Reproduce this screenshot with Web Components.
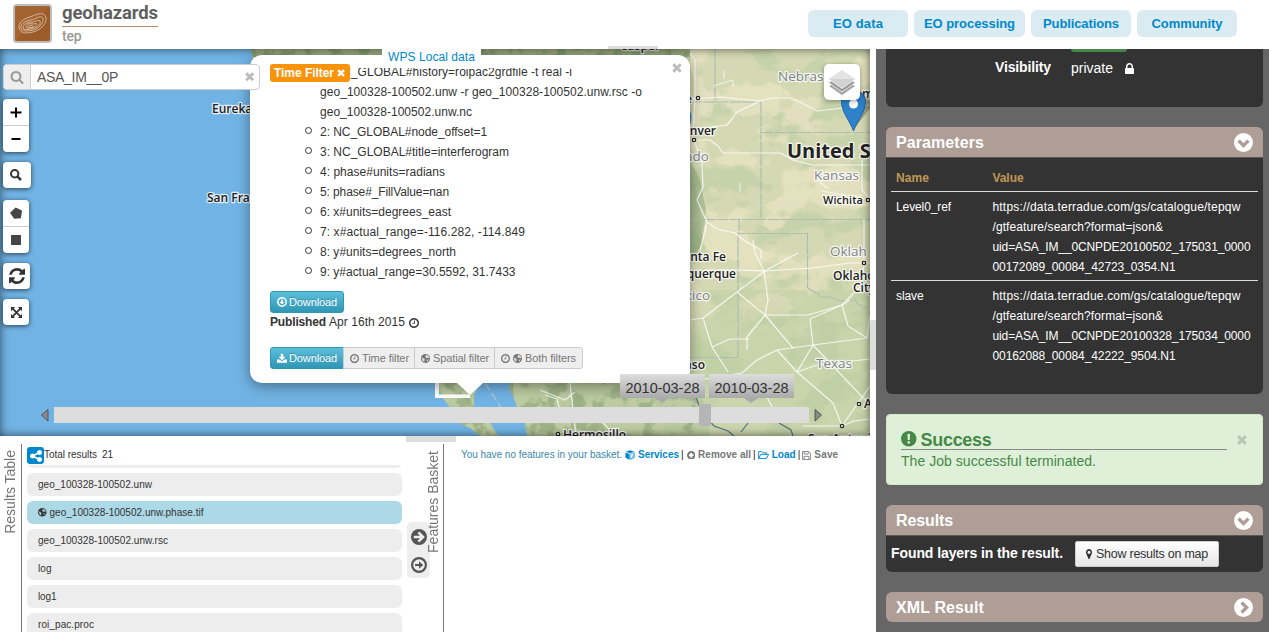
<!DOCTYPE html>
<html lang="en">
<head>
<meta charset="utf-8">
<title>Geohazards TEP</title>
<style>
html,body{margin:0;height:100%;overflow:hidden;background:#fff}
body{font:12px/20px "Liberation Sans",Arial,sans-serif;color:#333}
</style>
</head>
<body>
<tep-app></tep-app>
<script>
const define=(name,html,setup)=>{
  const t=document.createElement('template');t.innerHTML=html;
  customElements.define(name,class extends HTMLElement{
    constructor(){super();this.attachShadow({mode:'open'}).appendChild(t.content.cloneNode(true));}
    connectedCallback(){if(setup)setup(this,this.shadowRoot);}
  });
};

/* A run of text tracked to a given length (w, in px). */
define('fit-text','<style>:host{display:inline-block;white-space:pre;flex:none}</style><slot></slot>',el=>{
  const w=+el.getAttribute('w');if(!w)return;
  const n=el.textContent.length;
  const r=el.getBoundingClientRect().width;
  el.style.letterSpacing=((w-r)/n).toFixed(3)+'px';
});

const CLOCK='<path d="M1024 544v448q0 14-9 23t-23 9h-320q-14 0-23-9t-9-23v-64q0-14 9-23t23-9h224v-352q0-14 9-23t23-9h64q14 0 23 9t9 23zm416 352q0-148-73-273t-198-198-273-73-273 73-198 198-73 273 73 273 198 198 273 73 273-73 198-198 73-273zm224 0q0 209-103 385.5t-279.5 279.5-385.5 103-385.5-103-279.5-279.5-103-385.5 103-385.5 279.5-279.5 385.5-103 385.5 103 279.5 279.5 103 385.5z"/>';
const S='fill="none" stroke="currentColor"';
const ICONS={
 search:['0 0 1792 1792','<path d="M1216 832q0-185-131.5-316.5t-316.5-131.5-316.5 131.5-131.5 316.5 131.5 316.5 316.5 131.5 316.5-131.5 131.5-316.5zm512 832q0 52-38 90t-90 38q-54 0-90-38l-343-342q-179 124-399 124-143 0-273.5-55.5t-225-150-150-225-55.5-273.5 55.5-273.5 150-225 225-150 273.5-55.5 273.5 55.5 225 150 150 225 55.5 273.5q0 220-124 399l343 343q37 37 37 90z"/>'],
 bsearch:['0 0 12 12','<circle cx="4.700" cy="4.700" r="3.700" '+S+' stroke-width="2"/><path d="M7.300 7.300 11 11" '+S+' stroke-width="2.500"/>'],
 refresh:['128 128 1536 1536','<path d="M1639 1056q0 5-1 7-64 268-268 434.5t-478 166.5q-146 0-282.5-55t-243.5-157l-129 129q-19 19-45 19t-45-19-19-45v-448q0-26 19-45t45-19h448q26 0 45 19t19 45-19 45l-137 137q71 66 161 102t187 36q134 0 250-65t186-179q11-17 53-117 8-23 30-23h192q13 0 22.5 9.5t9.5 22.5zm25-800v448q0 26-19 45t-45 19h-448q-26 0-45-19t-19-45 19-45l138-138q-148-137-349-137-134 0-250 65t-186 179q-11 17-53 117-8 23-30 23h-199q-13 0-22.5-9.5t-9.5-22.5v-7q65-268 270-434.5t480-166.5q146 0 284 55.5t245 156.5l130-129q19-19 45-19t45 19 19 45z"/>'],
 share:['128 128 1536 1536','<path d="M1344 1024q133 0 226.5 93.5t93.5 226.5-93.5 226.5-226.5 93.5-226.5-93.5-93.5-226.5q0-12 2-34l-360-180q-92 86-218 86-133 0-226.5-93.5t-93.5-226.5 93.5-226.5 226.5-93.5q126 0 218 86l360-180q-2-22-2-34 0-133 93.5-226.5t226.5-93.5 226.5 93.5 93.5 226.5-93.5 226.5-226.5 93.5q-126 0-218-86l-360 180q2 22 2 34t-2 34l360 180q92-86 218-86z"/>'],
 lock:['320 128 1152 1408','<path d="M640 768h512v-192q0-106-75-181t-181-75-181 75-75 181v192zm832 96v576q0 40-28 68t-68 28h-960q-40 0-68-28t-28-68v-576q0-40 28-68t68-28h32v-192q0-184 132-316t316-132 316 132 132 316v192h32q40 0 68 28t28 68z"/>'],
 marker:['384 128 1024 1536','<path d="M1152 640q0-106-75-181t-181-75-181 75-75 181 75 181 181 75 181-75 75-181zm256 0q0 109-33 179l-364 774q-16 33-47.5 52t-67.5 19-67.5-19-46.5-52l-365-774q-33-70-33-179 0-212 150-362t362-150 362 150 150 362z"/>'],
 clock:['128 128 1536 1536',CLOCK],
 x:['0 0 10 10','<path d="M1.3 1.3 8.7 8.7M8.7 1.3 1.3 8.7" '+S+' stroke-width="3"/>'],
 down:['0 0 20 20','<circle cx="10" cy="10" r="10"/><path d="M4.8 8l5.2 5.2L15.200 8" fill="none" stroke="var(--in,#ae9e96)" stroke-width="3.600"/>'],
 next:['0 0 20 20','<circle cx="10" cy="10" r="10"/><path d="M8 4.800l5.200 5.200L8 15.200" fill="none" stroke="var(--in,#ae9e96)" stroke-width="3.600"/>'],
 arrowc:['0 0 16 16','<circle cx="8" cy="8" r="8"/><path d="M2.800 8h8.500M7.400 3.300 12.100 8l-4.700 4.700" fill="none" stroke="#eee" stroke-width="2.500"/>'],
 arrowo:['0 0 16 16','<circle cx="8" cy="8" r="6.900" '+S+' stroke-width="2.200"/><path d="M4 6.900h4V4.200L12.200 8 8 11.800V9.100H4z"/>'],
 dlcircle:['0 0 16 16','<circle cx="8" cy="8" r="6.700" '+S+' stroke-width="2.400"/><path d="M6.600 4h2.800v3.800H12L8 12 4 7.800h2.600z"/>'],
 dl:['0 0 16 16','<path d="M6 1h4v5h3.500L8 11.500 2.500 6H6zM0 10.500h4.500L8 13.500l3.500-3h4.500V15.500H0z"/>'],
 globe:['0 0 16 16','<circle cx="8" cy="8" r="8"/><path d="M9 1.500l4 1.700 1.600 3.300-2 1-1.300-1.500-2 1.300-1.600-2 1-1.600zM1.300 6l3.200 1.500 2.300 2-1 2 .2 3L3 12zM10.500 10l2.800-.3-1.300 3-1.500.4z" fill="var(--in,#eee)" opacity=".9"/>'],
 cube:['0 0 16 16','<path d="M8 .3l6.800 2.500L8 5.300 1.200 2.800zM.7 3.900l6.600 2.500v9L.7 12.300z"/><path d="M8.400 6.700l6.600-2.500v7.900l-6.600 3z" '+S+' stroke-width="1"/><path d="M14.500 4.500v7.600l-6 3z" opacity=".45"/>'],
 remove:['0 0 16 16','<circle cx="8" cy="8" r="6.300" '+S+' stroke-width="3.400"/><path d="M4 4l2 2M12 4l-2 2M4 12l2-2M12 12l-2-2" '+S+' stroke-width="2"/>'],
 folder:['0 0 18 16','<path d="M1 13.500V2.500h5l1.500 2H14V7M1 13.500 4.500 7h12.800L14 13.500z" '+S+' stroke-width="1.500"/>'],
 save:['0 0 16 16','<path d="M1 1h11l3 3v11H1zM4 1v4.500h7V1M3.800 15V9.500h8.400V15" '+S+' stroke-width="1.500"/>'],
 excl:['0 0 16 16','<circle cx="8" cy="8" r="8"/><path d="M6.600 3h2.800l-.4 6.400H7zM6.700 10.700h2.600v2.300H6.700z" fill="#dff0d8"/>'],
 full:['0 0 16 16','<path d="M2.500 2.500l11 11M13.500 2.500l-11 11" '+S+' stroke-width="2.600"/><path d="M0 0h6L0 6zM16 0v6l-6-6zM0 16v-6l6 6zM16 16h-6l6-6z"/>'],
 pent:['0 0 16 16','<path d="M7.500 .5 16 4.500l-1.500 10.500-9 .8L0 7.600z"/>'],
 square:['0 0 16 16','<path d="M0 0h16v16H0z"/>'],
 plus:['0 0 14 14','<path d="M1.500 7.500h11M7 2.500v10" '+S+' stroke-width="2"/>'],
 minus:['0 0 14 14','<path d="M2.500 7h9" '+S+' stroke-width="2"/>'],
 layers:['0 0 28 28','<g stroke="#fff" stroke-width=".7"><path d="M14 10.500 27.500 18 14 27.500.5 18z" fill="#a5a5a5"/><path d="M14 7 27.500 14.500 14 24 .5 14.500z" fill="#999"/><path d="M14 2 27.500 11 14 20.500.5 11z" fill="#d2d2d2"/></g><path d="M14 2 27.500 11H.5z" fill="#e4e4e4"/>']
};
customElements.define('tep-icon',class extends HTMLElement{
  constructor(){super();this.attachShadow({mode:'open'});}
  connectedCallback(){
    const [vb,body]=ICONS[this.getAttribute('name')],w=this.getAttribute('w'),h=this.getAttribute('h')||w;
    this.shadowRoot.innerHTML='<style>:host{display:inline-block;flex:none;line-height:0}svg{display:block}</style><svg width="'+w+'" height="'+h+'" viewBox="'+vb+'" fill="currentColor" preserveAspectRatio="none">'+body+'</svg>';
  }
});

define('tep-header',`<style>
:host{display:flex;height:49px;background:#fff;box-sizing:border-box}
.logo{display:block;margin:4px 0 0 13px}
.brand{display:flex;flex-direction:column;margin-left:10px;width:96px}
.g{font:bold 18.500px/26px Roboto,sans-serif;color:#606060;height:26px;border-bottom:1px solid #c08a63;margin-top:0}
.t{font:500 14px/18px Roboto,sans-serif;color:#999}
nav{display:flex;gap:6px;margin:10px 32px 0 auto}
a{display:flex;justify-content:center;width:100px;height:27px;border-radius:6px;background:#daebf2;color:#08c;font:bold 13px/27px "Liberation Sans",Arial,sans-serif}
</style>
<svg class="logo" width="39" height="39" viewBox="0 0 39 39"><rect x="1" y="1" width="37" height="37" rx="3" fill="#9b5c29" stroke="#bdbdbd" stroke-width="2"/><path d="M2 2h35L2 37z" fill="#a96b38" opacity=".55"/><g fill="none" stroke="#e2c9b3" stroke-width=".8"><path d="M6 24C5 19 10 15 17 13c5-2 10-4 13-3 4 1 4 8 0 12-4 5-12 7-17 7-4 0-6-2-7-5z"/><path d="M8 24c-1-4 4-7 10-8 5-1 8-4 11-3 2 1 1 5-1 8-3 4-9 6-14 6-3 0-5-1-6-3z"/><path d="M10 24c0-4 4-6 9-6 4 0 7-3 8-1 1 3-2 7-9 8-4 1-7 1-8-1z"/><path d="M13 23c0-3 3-4 6-3 3 0 5-1 5 0 0 2-3 3-6 4-2 0-4 1-5-1zM15 22.500c1-2 5-1 5 0s-5 1.500-5 0z"/></g></svg>
<div class="brand"><div class="g"><fit-text w="96">geohazards</fit-text></div><div class="t"><fit-text w="19.500">tep</fit-text></div></div>
<nav><a><fit-text w="50">EO data</fit-text></a><a style="width:111px"><fit-text w="91">EO processing</fit-text></a><a><fit-text w="76">Publications</fit-text></a><a><fit-text w="71">Community</fit-text></a></nav>`);

/* Base map: terrain, borders, roads and place names on one canvas. */
define('tep-basemap',`<style>:host{display:block}svg{display:block}
filter{color-interpolation-filters:sRGB}
text{font-family:"Open Sans","Noto Sans",sans-serif;paint-order:stroke;stroke:#fff;stroke-opacity:.8;stroke-width:2.500px;stroke-linejoin:round}
.c{font-size:12px;font-weight:600;fill:#222}.s{font-size:13.500px;fill:#7d8287}.r{text-anchor:end}</style>
<svg width="870" height="387" viewBox="0 49 870 387">
<defs>
<filter id="y" x="0" y="0" width="100%" height="100%" color-interpolation-filters="sRGB"><feTurbulence type="fractalNoise" baseFrequency=".017 .024" numOctaves="6" seed="4"/><feColorMatrix values="0 0 0 0 .91  0 0 0 0 .89  0 0 0 0 .76  14 0 0 0 -7"/></filter>
<filter id="gr" x="0" y="0" width="100%" height="100%" color-interpolation-filters="sRGB"><feTurbulence type="fractalNoise" baseFrequency=".02 .03" numOctaves="6" seed="11"/><feColorMatrix values="0 0 0 0 .73  0 0 0 0 .8  0 0 0 0 .63  0 12 0 0 -6.300"/></filter>
<filter id="dk" x="0" y="0" width="100%" height="100%" color-interpolation-filters="sRGB"><feTurbulence type="fractalNoise" baseFrequency=".07 .06" numOctaves="4" seed="8"/><feColorMatrix values="0 0 0 0 .5  0 0 0 0 .6  0 0 0 0 .43  0 7 0 0 -3.400"/></filter>
<linearGradient id="fade" x1="0" x2="0" y1="0" y2="1"><stop offset="0" stop-color="#fff"/><stop offset=".55" stop-color="#fff"/><stop offset=".75" stop-color="#fff" stop-opacity=".12"/></linearGradient>
<mask id="m"><rect x="690" y="49" width="180" height="387" fill="url(#fade)"/></mask>
<clipPath id="l"><path d="M251 49H870V436H527L525 423 517 407 513 396 509 389 510 383H480L474 395V407L480 416 491 424 498 436H480L470 428 459 423 450 407 442 397 436 383 300 300z"/></clipPath>
</defs>
<rect y="49" width="870" height="387" fill="#71b3e4"/>
<g clip-path="url(#l)"><rect y="49" width="870" height="387" fill="#c9d4ab"/>
<path d="M690 49H870V290H690z" fill="#d8dbb6" opacity=".7"/>
<rect x="250" y="49" width="620" height="387" filter="url(#gr)" opacity=".55"/>
<g mask="url(#m)"><rect x="690" y="49" width="180" height="387" filter="url(#y)" opacity=".8"/></g>
<path d="M600 49H684L694 80 690 170 700 205 702 240 690 270V383H700L710 436H430V383H600z" fill="#9fb78a" opacity=".3"/>
<rect x="430" y="383" width="270" height="53" filter="url(#dk)" opacity=".5"/><rect x="250" y="49" width="440" height="8" fill="#91a477" opacity=".6"/><rect x="250" y="49" width="440" height="8" filter="url(#dk)" opacity=".7"/><path d="M690 160l10 20 6 30-4 35-12 15z" fill="#769869" opacity=".4"/></g>
<g fill="none" stroke="#aebdb4" stroke-width="1.200" stroke-dasharray="12 1"><path d="M690 102H761M761 102V219M761 132.500H870M690 219.500H870M715 49V102M739 219V233M739 233.500H807.500V287M738 233V357M690 357.500H738M807 287l5 4 6 2 2 4 10 0 7 3 9 2 9-2 4 5 8 3"/></g>
<g fill="none" stroke="#fff" stroke-width="1.200" stroke-opacity=".8" stroke-linejoin="round">
<path d="M690 99l30-2 18 2 22 2 12-3 18 0 10 4 17 9 53-6"/><path d="M690 128h14l23-3 5-6 5-7 23-11"/><path d="M697 140l13 0 8 6 5 7h57l13 7 20 5h57"/><path d="M690 53l5 7v40l-2 37 9 26 1 24-6 13 10 22-7 29"/>
<path d="M707 222l10 7 18 4 10 8 16 9v9"/><path d="M705 270l32 0 28 1 47-3 38-5 20 0"/><path d="M753 240l2 13 9 18 4 29-3 15"/><path d="M765 315h43l34-10 8-5"/><path d="M765 271l33-18"/><path d="M690 320l13-2 34-26 28-21"/><path d="M737 292l28 23 28 33M765 315l-18 22v13"/><path d="M703 318l9 29 16 25M712 347l18-8 19 0"/><path d="M700 380l22-4 20-3 15-13 20-10 36-5 54-7"/>
<path d="M797 372l-20-22M797 372l16-27-3-26 32-14M813 345l57 60M797 372l36 31 9 23 16-23 12-17M797 372l20-7 53-6"/><path d="M842 305l6 21 19 12 3-22M842 426l-39 0M842 426l12-5 16-2"/><path d="M842 305l20-20 2-22M864 263v-44M862 160v30l8 8"/><path d="M545 395l12 4 3 12-8 6M540 390l25 10 10-8M570 383l6 53M615 436l-20-22M760 383l20 40"/>
<path d="M724 70v9M713 86l20-6v6M821 191l24 4 17 1M740 183v9M817 180l12 9" opacity=".8"/>
</g>
<path d="M696 398l6 14 12 14 14 5 6 5M748 423l-7 9M779 423l12 7 2 6" fill="none" stroke="#536e83" stroke-width="1.200"/>
<path d="M485 383l25 38" stroke="#a9c3d8" stroke-width="1.500" stroke-dasharray="9 3"/>
<path d="M435 383V398H470V394.500H439V383z" fill="#fff"/>
<text class="c" x="212" y="113">Eureka</text><text class="c" x="207" y="202">San Fra</text>
<text class="c" x="620" y="50">Casper</text>
<text class="c r" x="692" y="103">e</text><text class="c r" x="716" y="135">nver</text>
<text class="s r" x="709" y="161">ado</text><text class="c r" x="726" y="261">nta Fe</text><text class="c r" x="736" y="278">querque</text><text class="s r" x="710" y="300">xico</text><text class="c r" x="705" y="369">aso</text>
<text class="s" x="778" y="81">Nebras</text><text class="c" x="862" y="98">m</text>
<text x="787" y="158" style="font-size:20px;font-weight:700;fill:#222">United S</text>
<text class="s" x="814" y="180" textLength="45">Kansas</text><text class="c" x="823" y="204" textLength="40" style="font-size:11px">Wichita</text>
<text class="s" x="830" y="256">Oklah</text><text class="c" x="833" y="280">Oklaho</text><text class="c" x="853" y="292">City</text><text class="s" x="816" y="368">Texas</text>
<text class="c" x="563" y="439">Hermosillo</text><text class="c" x="808" y="443">San Antoni</text><text class="c" x="864" y="408">A</text>
<g fill="#fff" stroke="#222" stroke-width="1.200"><circle cx="698" cy="98" r="1.700"/><circle cx="694" cy="140" r="1.700"/><circle cx="868" cy="200" r="1.700"/><circle cx="864" cy="263" r="1.700"/><circle cx="859" cy="404" r="1.700"/><circle cx="842" cy="426" r="1.700"/><circle cx="558" cy="434" r="1.700"/></g>
<path d="M855 128l18-24-12-12z" fill="#000" opacity=".25"/>
<path d="M853.500 131C850 121 841.500 112 841.500 102a12 12 0 0 1 24 0c0 10-8.500 19-12 29z" fill="#2d82c9" stroke="#2268a8"/><circle cx="853.500" cy="104" r="4.500" fill="#fff"/>
<path d="M679 146C676 136 667 127 667 117a12 12 0 0 1 24.500 0c0 10-8 19-12.500 29z" fill="#2d82c9"/>
</svg>`);

define('map-button',`<style>:host{display:flex;flex-direction:column;width:26px;background:#fff;border-radius:4px;box-shadow:0 1px 5px rgba(0,0,0,.65);color:#333}
::slotted(*){height:26px;display:flex!important;align-items:center;justify-content:center}
::slotted(:not(:first-child)){border-top:1px solid #ccc}</style><slot></slot>`);

define('map-popup',`<style>
:host{display:block;width:440px;height:328px;background:#fff;border-radius:12px;box-shadow:0 3px 14px rgba(0,0,0,.4);position:relative}
.tip{position:absolute;left:207px;top:328px;border:13.500px solid transparent;border-top:12px solid #fff;border-bottom:0}
.title{position:absolute;left:132px;top:-6px;width:99px;height:18px;background:#fff;color:#08c;text-align:center;line-height:16px}
.close{position:absolute;left:422px;top:8px;color:#bbb}
.tag{position:absolute;left:20px;top:9px;width:76px;height:18px;padding-left:4px;display:flex;align-items:center;gap:3px;background:#fa930a;border-radius:3px;color:#fff;font-weight:bold;line-height:18px}
.scroll{padding-top:13px}
.clip{overflow:hidden;height:214px;padding-left:52px}
ul{margin:-6px 0 0;padding:0;list-style:none}
li{display:flex;gap:8px}
li i{width:5px;height:5px;border:1.300px solid #333;border-radius:50%;margin:5px 0 0 3px;flex:none}
.first i{visibility:hidden}
.btns{display:flex;margin:9px 0 0 20px}
.b{box-sizing:border-box;display:flex;align-items:center;height:22px;padding-left:6px;font-size:11px;border:1px solid #ccc;background:#eee;color:#777;gap:3px;line-height:20px;margin-left:-1px}
.p{width:74px;background:linear-gradient(#5bc0de,#2f96b4);border:1px solid #2f96b4;color:#fff;border-radius:3px;margin:0;gap:2px;text-shadow:0 -1px 0 rgba(0,0,0,.25);--in:#46a8c6}
.pub{display:flex;margin:-1px 0 0 20px;height:20px}
</style>
<div class="scroll"><div class="clip"><ul>
<li class="first"><i></i><div><fit-text w="252">1: NC_GLOBAL#history=roipac2grdfile -t real -i</fit-text><br><fit-text w="322">geo_100328-100502.unw -r geo_100328-100502.unw.rsc -o</fit-text><br><fit-text w="152">geo_100328-100502.unw.nc</fit-text></div></li>
<li><i></i><fit-text w="167">2: NC_GLOBAL#node_offset=1</fit-text></li><li><i></i><fit-text w="189">3: NC_GLOBAL#title=interferogram</fit-text></li><li><i></i><fit-text w="125">4: phase#units=radians</fit-text></li><li><i></i><fit-text w="129">5: phase#_FillValue=nan</fit-text></li><li><i></i><fit-text w="131">6: x#units=degrees_east</fit-text></li><li><i></i><fit-text w="205">7: x#actual_range=-116.282, -114.849</fit-text></li><li><i></i><fit-text w="136">8: y#units=degrees_north</fit-text></li><li><i></i><fit-text w="195.500">9: y#actual_range=30.5592, 31.7433</fit-text></li>
</ul></div></div>
<div class="btns"><span class="b p"><tep-icon name="dlcircle" w="10"></tep-icon><fit-text w="48">Download</fit-text></span></div>
<div class="pub"><b><fit-text w="56">Published</fit-text></b><fit-text w="76" style="margin:0 4px 0 3px">Apr 16th 2015</fit-text><tep-icon name="clock" w="10" style="margin-top:6px"></tep-icon></div>
<div class="btns" style="margin-top:15px"><span class="b p" style="border-radius:3px 0 0 3px"><tep-icon name="dl" w="10"></tep-icon><fit-text w="48">Download</fit-text></span><span class="b" style="width:72px"><tep-icon name="clock" w="9"></tep-icon><fit-text w="47">Time filter</fit-text></span><span class="b" style="width:81px"><tep-icon name="globe" w="9"></tep-icon><fit-text w="56">Spatial filter</fit-text></span><span class="b" style="width:89px;border-radius:0 3px 3px 0"><tep-icon name="clock" w="9"></tep-icon><tep-icon name="globe" w="9"></tep-icon><fit-text w="51">Both filters</fit-text></span></div>
<div class="tip"></div><div class="title"><fit-text w="87">WPS Local data</fit-text></div>
<tep-icon class="close" name="x" w="10"></tep-icon>
<div class="tag"><fit-text w="60">Time Filter</fit-text><tep-icon name="x" w="8"></tep-icon></div>`);

define('date-tag',`<style>:host{display:block;width:85px;height:24px;background:linear-gradient(#ddd,#aaa);color:#333;font-size:14.500px;line-height:28px;text-align:center;position:relative}
i{position:absolute;left:35px;top:24px;border:7px solid transparent;border-top:5.500px solid #aaa;border-bottom:0}</style><fit-text w="74"><slot></slot></fit-text><i></i>`,
(el,r)=>{const f=r.querySelector('fit-text');f.style.letterSpacing=((74-f.getBoundingClientRect().width)/el.textContent.length)+'px';});

define('tep-map',`<style>
:host{display:block;position:relative;width:870px;height:387px;overflow:hidden}
:host>*{position:absolute}
.shade{position:absolute;inset:0;box-shadow:inset 0 0 10px rgba(0,0,0,.6);pointer-events:none}
map-popup{left:250px;top:6px;position:absolute}
.search,.tools,.layers,.slider,.tags{position:absolute}
.search{left:3px;top:15px;width:257px;height:26px;box-sizing:border-box;border:1px solid #ccc;border-radius:4px;background:#fff;display:flex;align-items:center;color:#999;overflow:hidden}
.ad{width:26px;height:24px;background:#eee;border-right:1px solid #ccc;display:flex;align-items:center;justify-content:center}
.q{font-size:14px;color:#555;margin:-1px auto 0 6px}
.tools{left:3px;top:50px;display:flex;flex-direction:column;gap:10px}
.layers{left:824px;top:15px;width:36px;height:36px;border-radius:5px;background:#fff;box-shadow:0 1px 5px rgba(0,0,0,.4);display:flex;align-items:center;justify-content:center}
.slider{left:41px;top:355px;width:781px;display:flex;align-items:center;justify-content:space-between;height:22px}
.bar{width:755px;height:16px;background:#ddd;display:flex;align-items:center}
.bar i{width:12px;height:22px;background:#b5b5b5;margin-left:645px}
.tags{left:620px;top:325px;display:flex;gap:4px}
</style>
<tep-basemap></tep-basemap><div class="shade"></div>
<map-popup></map-popup>
<div class="search"><span class="ad"><tep-icon name="search" w="14"></tep-icon></span><span class="q"><fit-text w="81">ASA_IM__0P</fit-text></span><tep-icon name="x" w="9.500" style="margin-right:5px;color:#bbb"></tep-icon></div>
<div class="tools">
<map-button><span><tep-icon name="plus" w="14" style="color:#000"></tep-icon></span><span><tep-icon name="minus" w="14" style="color:#000"></tep-icon></span></map-button>
<map-button style="width:28px"><span><tep-icon name="bsearch" w="12" style="margin-right:3px"></tep-icon></span></map-button>
<map-button style="margin-top:2px"><span><tep-icon name="pent" w="12" style="color:#464646"></tep-icon></span><span><tep-icon name="square" w="10" style="color:#464646"></tep-icon></span></map-button>
<map-button style="width:27px"><span><tep-icon name="refresh" w="16"></tep-icon></span></map-button>
<map-button><span><tep-icon name="full" w="11"></tep-icon></span></map-button></div>
<div class="layers"><tep-icon name="layers" w="28"></tep-icon></div>
<div class="slider"><svg width="8" height="13"><path d="M7 .5V12L.5 6z" fill="#8a8a8a" stroke="#444" stroke-width=".8"/></svg><div class="bar"><i></i></div><svg width="8" height="13"><path d="M1 .5V12L7.500 6z" fill="#8a8a8a" stroke="#444" stroke-width=".8"/></svg></div>
<div class="tags"><date-tag>2010-03-28</date-tag><date-tag>2010-03-28</date-tag></div>`);

define('result-row',`<style>:host{display:flex;align-items:center;height:23px;border-radius:6px;background:#ededed;padding-left:11px;gap:3px;--in:#add8e6}:host([active]){background:#add8e6}</style><slot></slot>`);

define('side-label',`<style>:host{display:block;writing-mode:vertical-rl;transform:rotate(180deg);font-size:14px;line-height:16px;color:#777;white-space:pre}</style><slot></slot>`,el=>{
 const w=+el.getAttribute('w');el.style.alignSelf='flex-start';el.style.letterSpacing=((w-el.offsetHeight)/el.textContent.length)+'px';});

define('tep-results',`<style>
:host{display:flex;height:196px;box-sizing:border-box;padding-top:8px;overflow:hidden;position:relative;font-size:10px}
.grip{position:absolute;left:406px;top:0;width:50px;height:6px;background:#ddd}
.list{width:375px;margin-left:5px;padding-top:3px}
.head{display:flex;height:18px;line-height:16px}
.sh{width:17px;height:17px;border-radius:3px;background:#08c;color:#fff;display:flex;align-items:center;justify-content:center}
.rows{height:170px;overflow:hidden}
.rows div{display:flex;flex-direction:column;gap:5px;margin-top:-20px}
.l{width:1px;background:#777;height:200px}
.mv{width:23px;height:56px;border-radius:5px;background:#eee;margin:78px 0 0 5px;box-sizing:border-box;padding-top:7px;display:flex;flex-direction:column;align-items:center;gap:12px;color:#555}
.bk{display:flex;margin:2px 0 0 17px;height:18px;line-height:18px;color:#3a87ad;align-items:center}
b{color:#08c}.m{color:#777}.v{color:#222}
</style>
<div class="grip"></div>
<side-label w="84" style="margin:6px 3px 0 2px">Results Table</side-label><div class="l"></div>
<div class="list"><div class="head"><span class="sh"><tep-icon name="share" w="12"></tep-icon></span><fit-text w="53">Total results</fit-text><fit-text w="11" style="margin-left:5px">21</fit-text></div>
<div class="rows"><div><result-row></result-row>
<result-row><fit-text w="114">geo_100328-100502.unw</fit-text></result-row>
<result-row active><tep-icon name="globe" w="8.500"></tep-icon><fit-text w="154">geo_100328-100502.unw.phase.tif</fit-text></result-row>
<result-row><fit-text w="130">geo_100328-100502.unw.rsc</fit-text></result-row>
<result-row><fit-text w="13.500">log</fit-text></result-row>
<result-row><fit-text w="18.500">log1</fit-text></result-row>
<result-row><fit-text w="56">roi_pac.proc</fit-text></result-row></div></div></div>
<div class="mv"><tep-icon name="arrowc" w="16"></tep-icon><tep-icon name="arrowo" w="16"></tep-icon></div>
<side-label w="102" style="margin:7px 2px 0 -5px">Features Basket</side-label><div class="l"></div>
<div class="bk"><fit-text w="161">You have no features in your basket.</fit-text>
<tep-icon name="cube" w="10" style="color:#08c;margin:0 3px"></tep-icon><b><fit-text w="41">Services</fit-text></b><span class="v" style="margin:0 3px 0 2px">|</span>
<tep-icon name="remove" w="8.500" style="color:#777;margin-right:3px"></tep-icon><b class="m"><fit-text w="53">Remove all</fit-text></b><span class="v" style="margin:0 2px">|</span>
<tep-icon name="folder" w="11" h="10" style="color:#08c;margin-right:3px"></tep-icon><b><fit-text w="24">Load</fit-text></b><span class="v" style="margin:0 2px">|</span>
<tep-icon name="save" w="9" style="color:#777;margin-right:3px"></tep-icon><b class="m"><fit-text w="24">Save</fit-text></b></div>`);

define('tep-panel',`<style>:host{display:block;border-radius:6px;overflow:hidden;margin-bottom:20px;flex:none}
header{display:flex;justify-content:space-between;height:30px;padding:0 10px;background:#ae9e96;color:#fff;font:bold 16px/31px "Liberation Sans",Arial,sans-serif}
header tep-icon{margin-top:6px}
.body{background:#333;color:#fff}:host(:not([closed])) .body{border-top:1px solid #5d5855}</style>
<header><slot name="title"></slot></header><div class="body"><slot></slot></div>`,(el,r)=>{
 if(r.querySelector('tep-icon'))return;const i=document.createElement('tep-icon');i.setAttribute('name',el.hasAttribute('closed')?'next':'down');i.setAttribute('w','19');r.querySelector('header').append(i);});

define('tep-alert',`<style>:host{display:block;height:71px;box-sizing:border-box;background:#dff0d8;border:1px solid #d6e9c6;border-radius:4px;margin-bottom:20px;padding:13px 35px 0 14px;color:#468847;position:relative;flex:none}
h4{margin:0;font-size:18px;line-height:24px;height:21px;border-bottom:1px solid #888;display:flex;gap:4px}
h4 tep-icon{margin-top:3px}p{margin:0;font-size:14px;line-height:22px}
.x{position:absolute;right:15px;top:20px;color:#b7c4b1}</style>
<h4><tep-icon name="excl" w="15.500"></tep-icon><fit-text w="71">Success</fit-text></h4><p><fit-text w="195">The Job successful terminated.</fit-text></p><tep-icon class="x" name="x" w="10"></tep-icon>`);

define('tep-sidebar',`<style>
:host{display:flex;flex-direction:column;width:377px;padding:0 6px 0 10px;background:#666;overflow:hidden;height:583px}
.top{height:58px;box-sizing:border-box;background:#333;border-radius:0 0 6px 6px;margin-bottom:20px;color:#fff;padding-left:109px;flex:none}
.pill{width:56px;height:3px;background:#468847;border-radius:0 0 3px 3px;margin-left:76px}
.vis{display:flex;font-size:14px;line-height:30px}
.tb{height:236px;padding:10px 5px 0;box-sizing:border-box}
.row{display:grid;grid-template-columns:96.500px 1fr;padding:5px 0 3px 5px;border-bottom:1px solid #ddd}
.row.h{color:#c09853;padding:0 0 3px 5px;font-weight:bold}.row:last-child{border:0}
.res{display:flex;height:36px;box-sizing:border-box;padding:5px 5px 0;font-size:14px;font-weight:bold;line-height:24px}
.btn{display:flex;align-items:center;width:144px;height:26px;box-sizing:border-box;margin-left:12px;padding-left:10px;gap:4px;background:linear-gradient(#fff,#e6e6e6);border:1px solid #ccc;border-radius:2px;color:#333;font-size:12.500px;font-weight:normal}
</style>
<div class="top"><div class="pill"></div><div class="vis"><b><fit-text w="56">Visibility</fit-text></b><fit-text w="42" style="margin:1px 12px 0 20px">private</fit-text><tep-icon name="lock" w="9" h="11" style="margin-top:11px"></tep-icon></div></div>
<tep-panel><fit-text slot="title" w="88">Parameters</fit-text><div class="tb">
<div class="row h"><fit-text w="33" style="justify-self:start">Name</fit-text><fit-text w="31" style="justify-self:start">Value</fit-text></div>
<div class="row"><div><fit-text w="55">Level0_ref</fit-text></div><div><fit-text w="248">https://data.terradue.com/gs/catalogue/tepqw</fit-text><br><fit-text w="170.500">/gtfeature/search?format=json&amp;</fit-text><br><fit-text w="258">uid=ASA_IM__0CNPDE20100502_175031_0000</fit-text><br><fit-text w="183">00172089_00084_42723_0354.N1</fit-text></div></div>
<div class="row"><div><fit-text w="27.500">slave</fit-text></div><div><fit-text w="248">https://data.terradue.com/gs/catalogue/tepqw</fit-text><br><fit-text w="170.500">/gtfeature/search?format=json&amp;</fit-text><br><fit-text w="258">uid=ASA_IM__0CNPDE20100328_175034_0000</fit-text><br><fit-text w="183">00162088_00084_42222_9504.N1</fit-text></div></div>
</div></tep-panel>
<tep-alert></tep-alert>
<tep-panel><fit-text slot="title" w="57">Results</fit-text><div class="res"><fit-text w="172">Found layers in the result.</fit-text><span class="btn"><tep-icon name="marker" w="6" h="10"></tep-icon><fit-text w="112">Show results on map</fit-text></span></div></tep-panel>
<tep-panel closed><fit-text slot="title" w="88">XML Result</fit-text></tep-panel>`);

define('tep-app',`<style>:host{display:block;width:1269px;height:632px;overflow:hidden;position:relative}
.main{display:grid;grid-template-columns:870px 6px 393px;height:583px}
.gut{display:flex;align-items:center;height:592px}.gut i{width:6px;height:50px;background:#ddd}
.top{position:absolute;left:608px;top:46px;width:50px;height:3px;background:#ddd}</style>
<tep-header></tep-header><div class="main"><div><tep-map></tep-map><tep-results></tep-results></div><div class="gut"><i></i></div><tep-sidebar></tep-sidebar></div><div class="top"></div>`);
</script>
</body>
</html>
